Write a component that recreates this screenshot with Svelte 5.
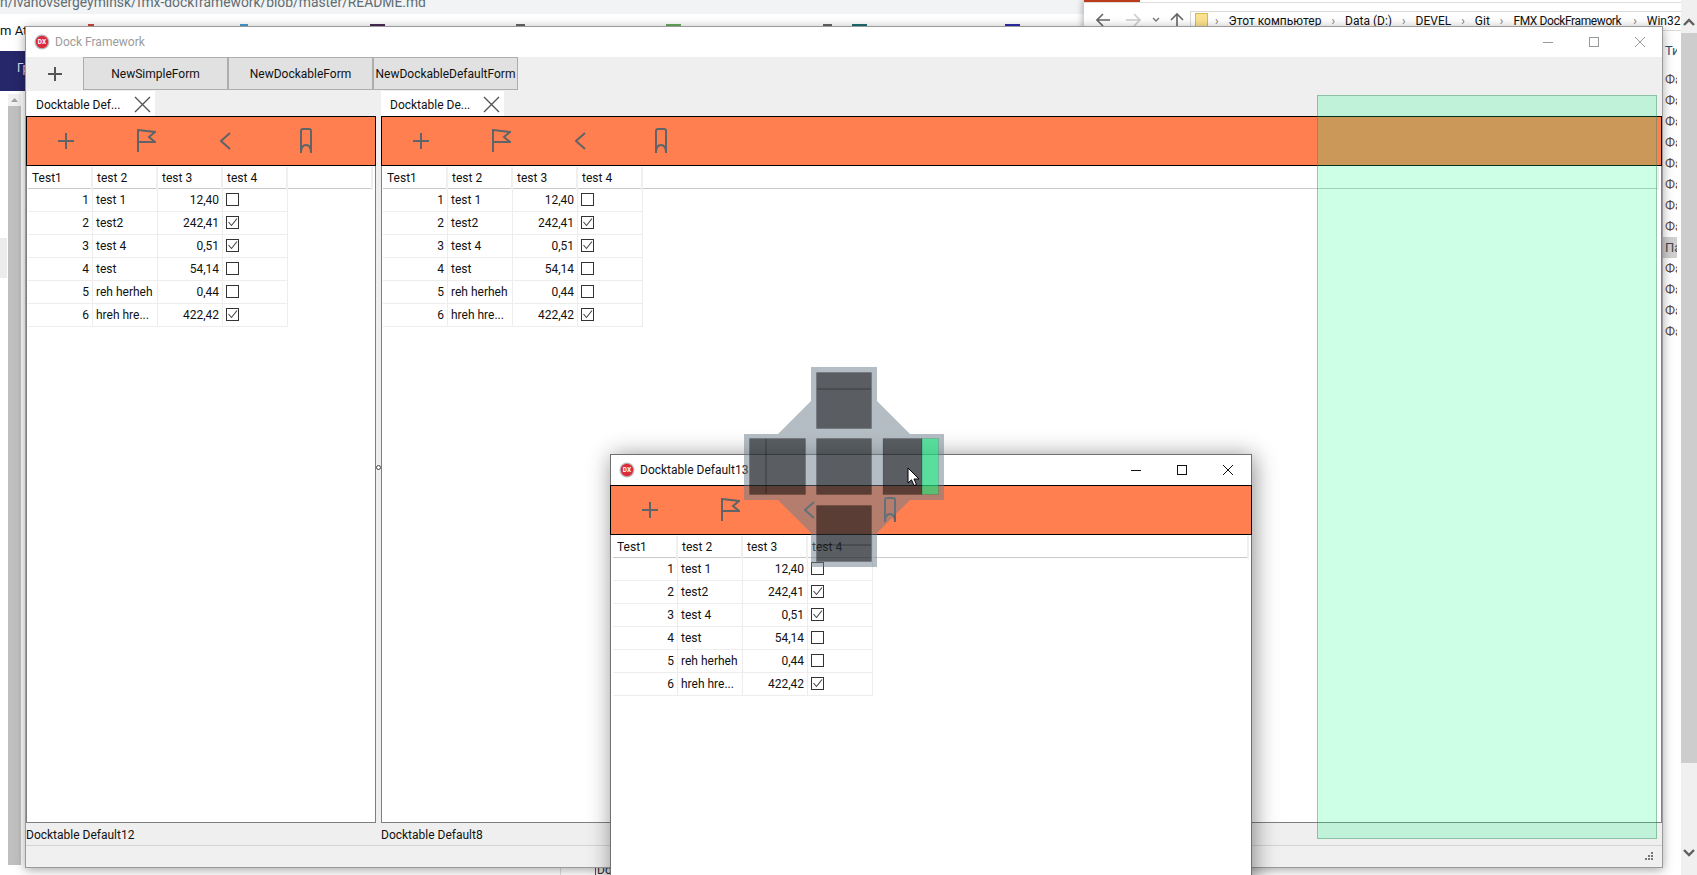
<script>
  const rows = [
    [1, "test 1", "12,40", false],
    [2, "test2", "242,41", true],
    [3, "test 4", "0,51", true],
    [4, "test", "54,14", false],
    [5, "reh herheh", "0,44", false],
    [6, "hreh hre...", "422,42", true]
  ];
  const heads = ["Test1", "test 2", "test 3", "test 4"];
  const toolButtons = ["NewSimpleForm", "NewDockableForm", "NewDockableDefaultForm"];
  const sideRows = ["Ф", "Ф", "Ф", "Ф", "Ф", "Ф", "Ф", "Ф", "П", "Ф", "Ф", "Ф", "Ф"];
  const crumbs = ["Этот компьютер", "Data (D:)", "DEVEL", "Git", "FMX DockFramework", "Win32"];
  const favs = [
    { x: 88, w: 6, c: "#d0453a" },
    { x: 240, w: 8, c: "#4a9bd0" },
    { x: 370, w: 15, c: "#4b2a57" },
    { x: 516, w: 9, c: "#666" },
    { x: 666, w: 15, c: "#6aa860" },
    { x: 823, w: 9, c: "#666" },
    { x: 852, w: 15, c: "#1f6f70" },
    { x: 1005, w: 15, c: "#2c2cb0" }
  ];
</script>

{#snippet logo()}
  <svg class="logo" width="16" height="16" viewBox="0 0 16 16">
    <circle cx="8" cy="8" r="7.5" fill="#b9b9b9" />
    <circle cx="8" cy="8" r="6.2" fill="#dc2b3a" />
    <text x="8" y="10" text-anchor="middle" font-size="6.5" font-weight="700" fill="#fff" font-family="Roboto, sans-serif">DX</text>
  </svg>
{/snippet}

{#snippet controls(cls)}
  <div class="controls {cls}">
    <svg width="12" height="12" viewBox="0 0 12 12"><path d="M1 6.5H11" /></svg>
    <svg width="12" height="12" viewBox="0 0 12 12"><rect x="1.5" y="1.5" width="9" height="9" /></svg>
    <svg width="12" height="12" viewBox="0 0 12 12"><path d="M1 1L11 11M11 1L1 11" /></svg>
  </div>
{/snippet}

{#snippet orangeBar()}
  <div class="orange">
    <div class="obtn">
      <svg width="18" height="18" viewBox="0 0 18 18"><path d="M9 1V17M1 9H17" /></svg>
    </div>
    <div class="obtn">
      <svg width="20" height="24" viewBox="0 0 20 24"><path d="M2 23V1L19 3L13 8L19 13L2 13" /></svg>
    </div>
    <div class="obtn">
      <svg width="12" height="18" viewBox="0 0 12 18"><path d="M10 1L1 9L10 17" /></svg>
    </div>
    <div class="obtn">
      <svg width="14" height="26" viewBox="0 0 14 26"><path d="M2 25V3Q2 1 4 1H10Q12 1 12 3V25M2 25Q2 17 7 17Q12 17 12 25" /></svg>
    </div>
  </div>
{/snippet}

{#snippet grid()}
  <div class="grid">
    <div class="ghead">
      {#each heads as h}
        <div class="hcell">{h}</div>
      {/each}
      <div class="hcell filler"></div>
    </div>
    {#each rows as r}
      <div class="grow">
        <div class="cell num">{r[0]}</div>
        <div class="cell txt">{r[1]}</div>
        <div class="cell num">{r[2]}</div>
        <div class="cell chk">
          <span class="cbx">
            {#if r[3]}
              <svg width="11" height="11" viewBox="0 0 11 11"><path d="M1.5 5L4.5 8.5L10 1.5" /></svg>
            {/if}
          </span>
        </div>
      </div>
    {/each}
  </div>
{/snippet}

{#snippet panel(tab, caption)}
  <div class="tabs">
    <div class="tab">
      <span>{tab}</span>
      <svg width="17" height="17" viewBox="0 0 17 17"><path d="M1 1L16 16M16 1L1 16" /></svg>
    </div>
  </div>
  <div class="box">
    {@render orangeBar()}
    {@render grid()}
  </div>
  <div class="caption">{caption}</div>
{/snippet}

<div class="desktop">
  <!-- stuff behind the app: browser and explorer -->
  <div class="browser">
    <div class="urlbar">n/ivanovsergeyminsk/fmx-dockframework/blob/master/README.md</div>
    <div class="favs">
      <span class="favtext">m At</span>
      {#each favs as f}
        <span class="fav" style="left: {f.x}px; width: {f.w}px; background: {f.c}"></span>
      {/each}
    </div>
    <div class="band">Гр</div>
    <div class="greybox"></div>
    <div class="lscroll">
      <svg width="13" height="12" viewBox="0 0 13 12"><path d="M3 8L6.5 4L10 8Z" fill="#a0a0a0" /></svg>
      <div class="lthumb"></div>
    </div>
    <div class="under">
      <span class="uline"></span>
      <span class="utext">Doc</span>
    </div>
  </div>

  <div class="explorer">
    <div class="extab"></div>
    <div class="exnav">
      <svg width="94" height="18" viewBox="0 0 94 18">
        <path d="M1 9H14M7 3L1 9L7 15" stroke="#666" fill="none" stroke-width="1.6" />
        <path d="M30 9H44M38 3L44 9L38 15" stroke="#ccc" fill="none" stroke-width="1.6" />
        <path d="M57 7L60 10L63 7" stroke="#777" fill="none" stroke-width="1.4" />
        <path d="M81 16V3M75 9L81 3L87 9" stroke="#666" fill="none" stroke-width="1.6" />
      </svg>
      <div class="address">
        <span class="folder"></span>
        {#each crumbs as c}
          <span class="sep">›</span><span class="crumb" class:tight={c.startsWith("FMX")}>{c}</span>
        {/each}
      </div>
    </div>
    <div class="exbody">
      <div class="exlist">
        <div class="exhead">Ти</div>
        {#each sideRows as s}
          <div class="exrow" class:sel={s === "П"}>{s}а</div>
        {/each}
      </div>
      <div class="vscroll">
        <svg width="16" height="12" viewBox="0 0 16 12"><path d="M3 9L8 4L13 9" /></svg>
        <div class="vthumb"></div>
        <div class="vrest"></div>
        <svg width="16" height="12" viewBox="0 0 16 12"><path d="M3 3L8 8L13 3" /></svg>
      </div>
    </div>
  </div>

  <!-- main form -->
  <div class="window main">
    <div class="titlebar dim">
      {@render logo()}
      <span>Dock Framework</span>
      {@render controls("inactive")}
    </div>
    <div class="toolbar">
      <div class="addbtn">
        <svg width="18" height="18" viewBox="0 0 18 18"><path d="M9 2V16M2 9H16" /></svg>
      </div>
      {#each toolButtons as b}
        <div class="tbtn">{b}</div>
      {/each}
    </div>
    <div class="dock">
      <div class="dockcol left">
        {@render panel("Docktable Def...", "Docktable Default12")}
      </div>
      <div class="split"><span class="knob"></span></div>
      <div class="dockcol right">
        {@render panel("Docktable De...", "Docktable Default8")}
      </div>
    </div>
    <div class="status">
      <svg width="12" height="12" viewBox="0 0 12 12" fill="#777">
        <rect x="9" y="1" width="2" height="2" /><rect x="6" y="4" width="2" height="2" /><rect x="9" y="4" width="2" height="2" />
        <rect x="3" y="7" width="2" height="2" /><rect x="6" y="7" width="2" height="2" /><rect x="9" y="7" width="2" height="2" />
      </svg>
    </div>
  </div>

  <div class="drophint"></div>

  <!-- floating form being dragged -->
  <div class="window float">
    <div class="titlebar">
      {@render logo()}
      <span>Docktable Default13</span>
      {@render controls("active")}
    </div>
    <div class="floatbody">
      {@render orangeBar()}
      {@render grid()}
    </div>
  </div>

  <!-- dock target cross -->
  <svg class="cross" width="200" height="200" viewBox="744 367 200 200">
    <path fill="rgba(105,123,137,.5)" d="M811 367H877V401L910 434H944V500H910L877 533V567H811V533L778 500H744V434H778L811 401Z" />
    <g fill="rgba(0,0,0,.5)" stroke="rgba(0,0,0,.12)">
      <rect x="816.5" y="372.5" width="55" height="56" />
      <rect x="749.5" y="438.5" width="56" height="56" />
      <rect x="816.5" y="438.5" width="55" height="56" />
      <rect x="883" y="438.5" width="39" height="56" />
      <rect x="816.5" y="505.5" width="55" height="56" />
    </g>
    <rect x="922" y="438.5" width="16.5" height="56" fill="rgba(0,255,120,.5)" stroke="rgba(0,0,0,.12)" />
    <g stroke="rgba(0,0,0,.18)" stroke-width="2">
      <path d="M817 389H871M766 439V494M817 545H871" />
    </g>
  </svg>
  <svg class="cursor" width="14" height="20" viewBox="0 0 14 20">
    <path d="M1 1V16L4.5 12.8L7 18.5L9.5 17.5L7 12H12Z" fill="#fff" stroke="#000" stroke-width="1" />
  </svg>
</div>

<style>
  :global(body) {
    margin: 0;
    font-family: Roboto, "Liberation Sans", sans-serif;
    font-size: 12px;
    color: #111;
  }
  .desktop {
    position: relative;
    width: 1697px;
    height: 875px;
    overflow: hidden;
    background: #fff;
  }

  /* background apps */
  .browser {
    position: absolute;
    left: 0;
    top: 0;
    width: 1084px;
    height: 875px;
  }
  .urlbar {
    height: 14px;
    background: #f1f3f4;
    color: #5f6d72;
    font-size: 13.85px;
    line-height: 4px;
    overflow: hidden;
    white-space: nowrap;
  }
  .favs {
    position: relative;
    height: 37px;
  }
  .favtext {
    position: absolute;
    left: 0;
    top: 9px;
    font-size: 13px;
  }
  .fav {
    position: absolute;
    top: 10px;
    height: 4px;
  }
  .band {
    height: 40px;
    width: 26px;
    background: #26266a;
    color: #dde;
    font-size: 12px;
    line-height: 34px;
    padding-left: 17px;
    box-sizing: border-box;
  }
  .greybox {
    position: absolute;
    left: 0;
    top: 238px;
    width: 7px;
    height: 40px;
    background: #ececec;
  }
  .lscroll {
    position: absolute;
    left: 8px;
    top: 94px;
    width: 13px;
    height: 771px;
    display: flex;
    flex-direction: column;
    background: #f1f1f1;
  }
  .lthumb {
    flex: 1;
    background: #c0c0c0;
  }
  .under {
    position: absolute;
    top: 867px;
    left: 560px;
    height: 8px;
    display: flex;
  }
  .uline {
    width: 34px;
    border-left: 1px solid #ddd;
  }
  .utext {
    border-left: 1px solid #555;
    padding-left: 1px;
    line-height: 6px;
    color: #333;
  }

  .explorer {
    position: absolute;
    left: 1084px;
    top: 0;
    right: 0;
    height: 875px;
    background: #fff;
    box-shadow: -2px 0 6px rgba(0, 0, 0, 0.25);
  }
  .extab {
    width: 56px;
    height: 2px;
    background: #b83b1c;
  }
  .exnav {
    border-top: 1px solid #ddd;
    display: flex;
    align-items: flex-start;
    padding: 8px 0 0 12px;
    height: 24px;
  }
  .address {
    display: flex;
    align-items: center;
    height: 18px;
    flex: 1;
    border: 1px solid #d9d9d9;
    border-right: 0;
    white-space: nowrap;
    overflow: hidden;
    padding-left: 4px;
  }
  .folder {
    width: 11px;
    height: 15px;
    margin-right: 7px;
    background: #fbe28e;
    border: 1px solid #d9b84e;
    flex: none;
  }
  .sep {
    color: #777;
    margin-right: 10px;
  }
  .crumb {
    margin-right: 10px;
    color: #111;
  }
  .crumb.tight {
    letter-spacing: -0.4px;
    margin-right: 12px;
  }
  .exbody {
    position: absolute;
    left: 0;
    top: 18px;
    right: 0;
    bottom: 0;
    display: flex;
    justify-content: flex-end;
  }
  .exlist {
    width: 15px;
    margin-right: 4px;
    padding-top: 24px;
    overflow: hidden;
  }
  .exhead {
    height: 27px;
    color: #2d4f73;
    line-height: 18px;
    padding-left: 3px;
    font-size: 13px;
  }
  .exrow {
    height: 21px;
    line-height: 21px;
    padding-left: 3px;
    color: #5a4a42;
    font-size: 13px;
    white-space: nowrap;
  }
  .exrow.sel {
    background: #cfcfcf;
    color: #444;
  }
  .vscroll {
    width: 16px;
    background: #f0f0f0;
    display: flex;
    flex-direction: column;
    margin-top: -18px;
  }
  .vscroll svg {
    flex: none;
    fill: none;
    stroke: #606060;
    stroke-width: 2.4;
    margin: 16px 0 5px;
  }
  .vthumb {
    height: 730px;
    background: #cdcdcd;
  }
  .vrest {
    flex: 1;
  }
  .vscroll svg:last-child {
    margin: 0 0 16px;
  }

  /* forms */
  .window {
    position: absolute;
    display: flex;
    flex-direction: column;
    box-sizing: border-box;
  }
  .main {
    left: 25px;
    top: 26px;
    width: 1638px;
    height: 842px;
    background: #efefef;
    border: 1px solid #9a9a9a;
    box-shadow: 0 2px 10px rgba(0, 0, 0, 0.35);
  }
  .titlebar {
    height: 30px;
    flex: none;
    background: #fff;
    display: flex;
    align-items: center;
    padding-left: 8px;
    gap: 5px;
  }
  .titlebar.dim {
    color: #9b9b9b;
  }
  .logo {
    flex: none;
  }
  .controls {
    margin-left: auto;
    display: flex;
    gap: 34px;
  }
  .controls.inactive {
    padding-right: 16px;
  }
  .controls.active {
    padding-right: 17px;
  }
  .controls svg {
    fill: none;
    stroke: #111;
    stroke-width: 1;
  }
  .controls.inactive svg {
    stroke: #999;
  }
  .toolbar {
    height: 33px;
    flex: none;
    display: flex;
  }
  .addbtn {
    width: 57px;
    display: flex;
    align-items: center;
    justify-content: center;
  }
  .addbtn svg {
    fill: none;
    stroke: #555;
    stroke-width: 2;
  }
  .tbtn {
    width: 145px;
    box-sizing: border-box;
    display: flex;
    align-items: center;
    justify-content: center;
    background: #e1e1e1;
    border: 1px solid #adadad;
    white-space: nowrap;
  }
  .dock {
    flex: 1;
    display: flex;
    min-height: 0;
  }
  .dockcol {
    display: flex;
    flex-direction: column;
    min-width: 0;
  }
  .dockcol.left {
    width: 350px;
  }
  .dockcol.right {
    flex: 1;
  }
  .split {
    width: 5px;
    display: flex;
    align-items: center;
    justify-content: center;
  }
  .knob {
    width: 3px;
    height: 3px;
    flex: none;
    border: 1px solid #444;
    border-radius: 50%;
    background: #fff;
  }
  .tabs {
    height: 26px;
    flex: none;
    display: flex;
    align-items: flex-end;
  }
  .tab {
    height: 25px;
    box-sizing: border-box;
    background: #fff;
    display: flex;
    align-items: center;
    justify-content: space-between;
    padding: 2px 4px 0 9px;
    margin-left: 1px;
  }
  .left .tab {
    width: 128px;
  }
  .right .tab {
    margin-left: 0;
    width: 123px;
  }
  .tab svg {
    fill: none;
    stroke: #555;
    stroke-width: 1.4;
    flex: none;
  }
  .box {
    flex: 1;
    min-height: 0;
    background: #fff;
    border: 1px solid #7f7f7f;
    border-top: 0;
  }
  .orange {
    height: 50px;
    box-sizing: border-box;
    margin: 0 -1px;
    background: #ff7f50;
    border: 1px solid #000;
    display: flex;
  }
  .obtn {
    width: 80px;
    display: flex;
    align-items: center;
    justify-content: center;
  }
  .obtn:first-child {
    margin-left: -1px;
  }
  .obtn svg {
    fill: none;
    stroke: #5f6468;
    stroke-width: 2;
  }
  .grid {
    padding: 1px 2px 0 1px;
  }
  .floatbody .grid {
    padding-left: 2px;
  }
  .ghead {
    display: grid;
    grid-template-columns: repeat(4, 65px) 1fr;
    height: 22px;
    box-sizing: border-box;
    border-bottom: 1px solid #c9c9c9;
  }
  .hcell {
    border-right: 2px solid #efefef;
    padding-left: 4px;
    line-height: 23px;
    white-space: nowrap;
  }
  .grow {
    display: grid;
    grid-template-columns: repeat(4, 65px);
    width: 260px;
    height: 23px;
    box-sizing: border-box;
    border-bottom: 1px solid #ededed;
  }
  .cell {
    border-right: 1px solid #ededed;
    line-height: 23px;
    white-space: nowrap;
    overflow: hidden;
  }
  .cell.num {
    text-align: right;
    padding-right: 3px;
  }
  .cell.txt {
    padding-left: 3px;
  }
  .chk {
    padding: 4px 0 0 3px;
    box-sizing: border-box;
  }
  .cbx {
    display: block;
    width: 13px;
    height: 13px;
    box-sizing: border-box;
    border: 1px solid #333;
  }
  .cbx svg {
    display: block;
    fill: none;
    stroke: #444;
    stroke-width: 1.1;
  }
  .caption {
    height: 22px;
    flex: none;
    line-height: 24px;
    white-space: nowrap;
  }
  .status {
    height: 22px;
    flex: none;
    box-sizing: border-box;
    border-top: 1px solid #d4d4d4;
    background: #f0f0f0;
    display: flex;
    justify-content: flex-end;
    align-items: center;
    padding-right: 8px;
  }

  .drophint {
    position: absolute;
    left: 1317px;
    top: 95px;
    width: 340px;
    height: 744px;
    box-sizing: border-box;
    background: rgba(0, 255, 127, 0.2);
    border: 1px solid rgba(60, 120, 90, 0.4);
  }

  .float {
    left: 610px;
    top: 454px;
    width: 642px;
    height: 440px;
    background: #fff;
    border: 1px solid #707070;
    box-shadow: 2px 2px 22px rgba(0, 0, 0, 0.45);
  }
  .floatbody {
    flex: 1;
  }
  .cross {
    position: absolute;
    left: 744px;
    top: 367px;
  }
  .cursor {
    position: absolute;
    left: 907px;
    top: 467px;
  }
</style>
